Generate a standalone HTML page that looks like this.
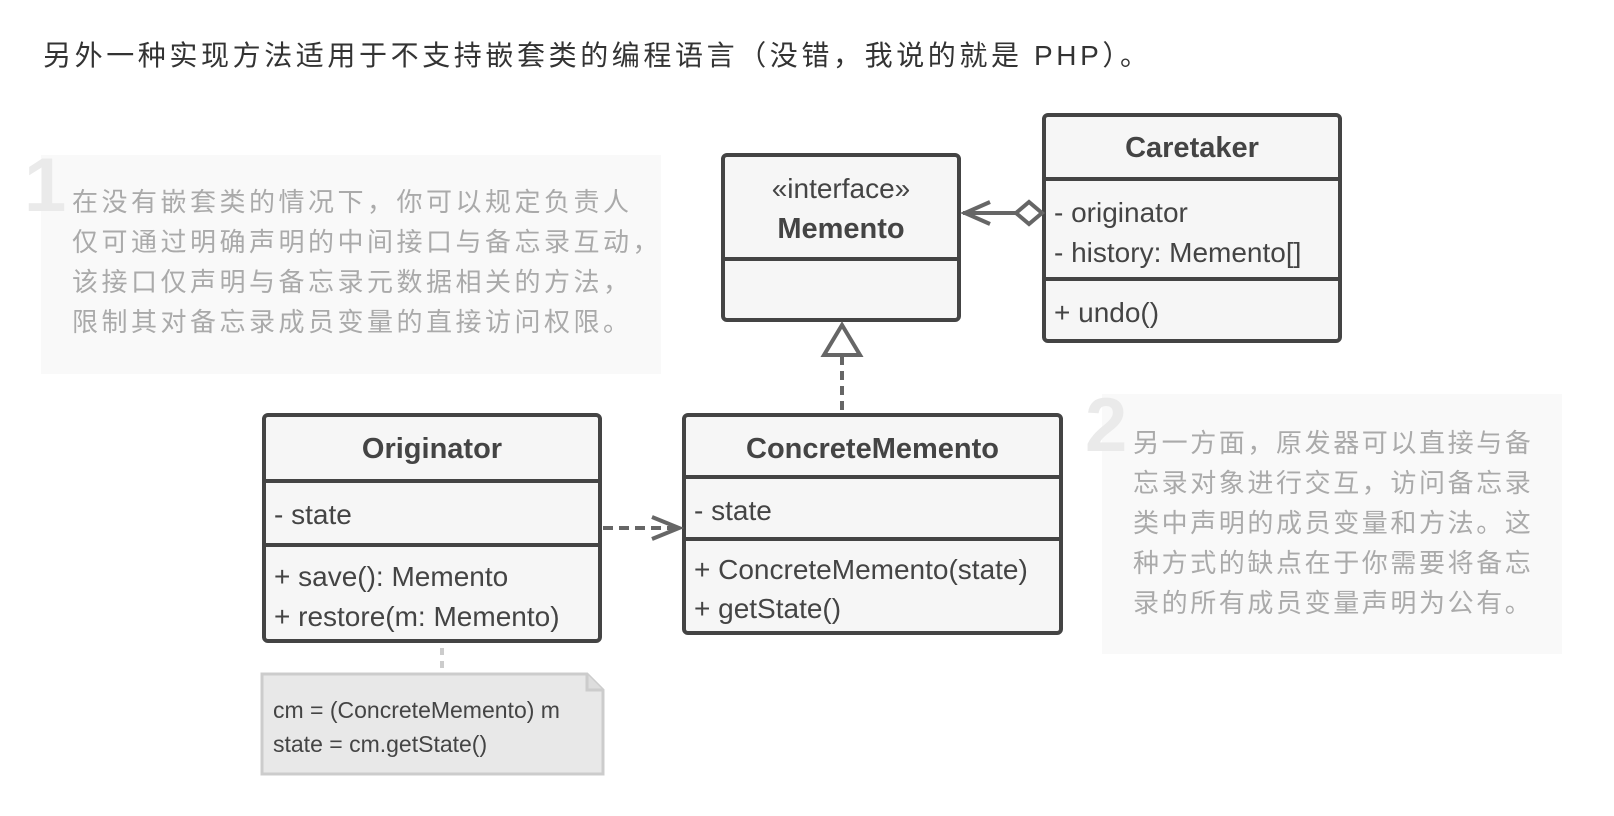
<!DOCTYPE html>
<html><head><meta charset="utf-8"><style>
*{margin:0;padding:0;box-sizing:border-box}
body{width:1614px;height:816px;background:#fff;position:relative;overflow:hidden;font-family:"Liberation Sans","Noto Sans CJK SC",sans-serif;color:#444}
.abs{position:absolute}
.h{left:43px;top:34px;font-size:28px;color:#333;letter-spacing:3.6px;white-space:nowrap}
.note{background:#f9f9f9}
.num{font-size:76px;color:#eaeaea;font-weight:bold;line-height:1}
.nt{color:#aaa;font-size:26px;line-height:40px;white-space:nowrap}
.box{border:4px solid #444;border-radius:6px;background:#f6f6f6}
.sec{position:absolute;left:0;right:0;border-bottom:4px solid #444}
.t{position:absolute;white-space:nowrap;font-size:28px;line-height:1;color:#444}
.b{font-weight:bold;font-size:29px;left:0;right:0;text-align:center}
</style></head><body>
<div class="abs h">另外一种实现方法适用于不支持嵌套类的编程语言（没错，我说的就是 PHP）。</div>

<div class="abs note" style="left:41px;top:155px;width:620px;height:219px"></div>
<div class="abs num" style="left:24px;top:148px">1</div>
<div class="abs nt" style="left:72px;top:182px;letter-spacing:3.5px">在没有嵌套类的情况下，你可以规定负责人<br>仅可通过明确声明的中间接口与备忘录互动，<br>该接口仅声明与备忘录元数据相关的方法，<br>限制其对备忘录成员变量的直接访问权限。</div>

<div class="abs note" style="left:1102px;top:394px;width:460px;height:260px"></div>
<div class="abs num" style="left:1085px;top:388px">2</div>
<div class="abs nt" style="left:1133px;top:423px;letter-spacing:2.6px">另一方面，原发器可以直接与备<br>忘录对象进行交互，访问备忘录<br>类中声明的成员变量和方法。这<br>种方式的缺点在于你需要将备忘<br>录的所有成员变量声明为公有。</div>

<!-- Memento -->
<div class="abs box" style="left:721px;top:153px;width:240px;height:169px">
<div class="sec" style="top:0;height:104px"></div>
<div class="t" style="left:0;right:0;text-align:center;top:18px">«interface»</div>
<div class="t b" style="top:58px">Memento</div>
</div>

<!-- Caretaker -->
<div class="abs box" style="left:1042px;top:113px;width:300px;height:230px">
<div class="sec" style="top:0;height:64px"></div>
<div class="sec" style="top:64px;height:100px"></div>
<div class="t b" style="top:17px">Caretaker</div>
<div class="t" style="left:8px;top:82px">- originator</div>
<div class="t" style="left:8px;top:122px">- history: Memento[]</div>
<div class="t" style="left:8px;top:182px">+ undo()</div>
</div>

<!-- Originator -->
<div class="abs box" style="left:262px;top:413px;width:340px;height:230px">
<div class="sec" style="top:0;height:66px"></div>
<div class="sec" style="top:66px;height:64px"></div>
<div class="t b" style="top:18px">Originator</div>
<div class="t" style="left:8px;top:84px">- state</div>
<div class="t" style="left:8px;top:146px">+ save(): Memento</div>
<div class="t" style="left:8px;top:186px">+ restore(m: Memento)</div>
</div>

<!-- ConcreteMemento -->
<div class="abs box" style="left:682px;top:413px;width:381px;height:222px">
<div class="sec" style="top:0;height:62px"></div>
<div class="sec" style="top:62px;height:62px"></div>
<div class="t b" style="top:18px">ConcreteMemento</div>
<div class="t" style="left:8px;top:80px">- state</div>
<div class="t" style="left:8px;top:139px">+ ConcreteMemento(state)</div>
<div class="t" style="left:8px;top:178px">+ getState()</div>
</div>

<svg class="abs" style="left:0;top:0" width="1614" height="816">
<g fill="none" stroke="#666" stroke-width="4">
<line x1="963" y1="213" x2="1016" y2="213"/>
<polyline points="990,202 965,213 990,224"/>
<polygon points="1016,213 1029,202 1042,213 1029,224" fill="#fff"/>
<line x1="842" y1="356" x2="842" y2="412" stroke-dasharray="9,6"/>
<polygon points="842,325 824,355 860,355" fill="#fff"/>
<line x1="603" y1="528" x2="678" y2="528" stroke-dasharray="10,6"/>
<polyline points="652,517 679,528 652,539"/>
</g>
<line x1="442" y1="648" x2="442" y2="672" stroke="#ccc" stroke-width="4" stroke-dasharray="7,6"/>
<path d="M262,674 H587 L603,690 V774 H262 Z" fill="#e8e8e8" stroke="#ccc" stroke-width="3"/>
<path d="M587,674 V690 H603" fill="#ddd" stroke="#ccc" stroke-width="3"/>
<text x="273" y="718" font-family="Liberation Sans,sans-serif" font-size="23" fill="#444">cm = (ConcreteMemento) m</text>
<text x="273" y="752" font-family="Liberation Sans,sans-serif" font-size="23" fill="#444">state = cm.getState()</text>
</svg>
</body></html>
